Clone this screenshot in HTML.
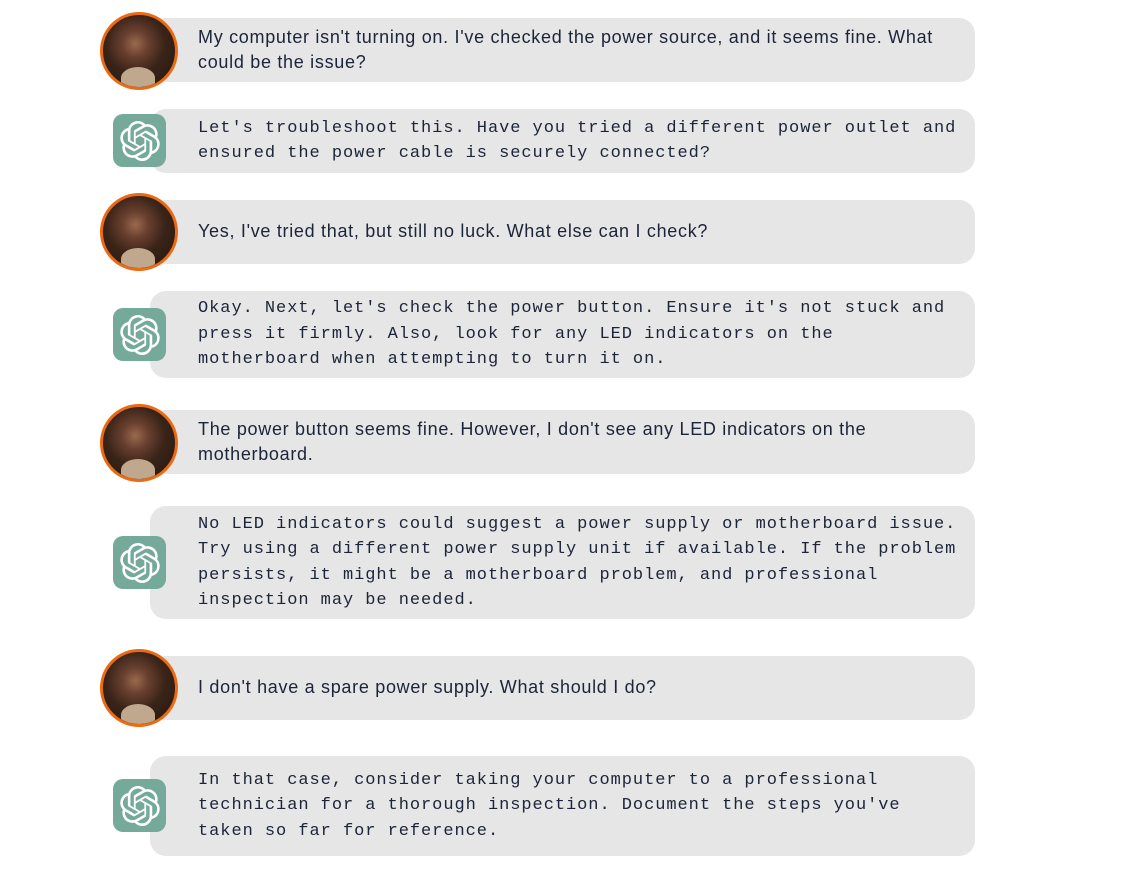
<!DOCTYPE html>
<html><head><meta charset="utf-8"><style>
body{margin:0;width:1144px;height:874px;background:#fff;position:relative;overflow:hidden;font-family:"Liberation Sans",sans-serif;color:#1c2438}
.b{position:absolute;left:150px;width:825px;background:#e6e6e6;border-radius:16px;display:flex;align-items:center;box-sizing:border-box;padding-left:48px}
.b div{line-height:25.5px}
.u div{font-size:18px;letter-spacing:0.7px}
.m div{font-family:"Liberation Mono",monospace;font-size:17px;letter-spacing:0.95px;white-space:pre}
.av{position:absolute;left:100px;width:72px;height:72px;border:3px solid #ec6a12;border-radius:50%;background:radial-gradient(circle at 45% 40%,#9a6a4c 0,#6a4030 22%,#3a2418 50%,#221610 100%);overflow:hidden}
.av:after{content:"";position:absolute;left:18px;top:52px;width:34px;height:22px;border-radius:50% 50% 0 0;background:#bfa88e}
.ic{position:absolute;left:113px;width:53px;height:53px;border-radius:10px;background:#75a999;display:flex;align-items:center;justify-content:center}
</style></head><body>
<svg width="0" height="0" style="position:absolute"><defs><symbol id="o" viewBox="0 0 24 24"><path fill="#fff" d="M22.2819 9.8211a5.9847 5.9847 0 0 0-.5157-4.9108 6.0462 6.0462 0 0 0-6.5098-2.9A6.0651 6.0651 0 0 0 4.9807 4.1818a5.9847 5.9847 0 0 0-3.9977 2.9 6.0462 6.0462 0 0 0 .7427 7.0966 5.98 5.98 0 0 0 .511 4.9107 6.051 6.051 0 0 0 6.5146 2.9001A5.9847 5.9847 0 0 0 13.2599 24a6.0557 6.0557 0 0 0 5.7718-4.2058 5.9894 5.9894 0 0 0 3.9977-2.9001 6.0557 6.0557 0 0 0-.7475-7.0729zm-9.022 12.6081a4.4755 4.4755 0 0 1-2.8764-1.0408l.1419-.0804 4.7783-2.7582a.7948.7948 0 0 0 .3927-.6813v-6.7369l2.02 1.1686a.071.071 0 0 1 .038.052v5.5826a4.504 4.504 0 0 1-4.4945 4.4944zm-9.6607-4.1254a4.4708 4.4708 0 0 1-.5346-3.0137l.142.0852 4.783 2.7582a.7712.7712 0 0 0 .7806 0l5.8428-3.3685v2.3324a.0804.0804 0 0 1-.0332.0615L9.74 19.9502a4.4992 4.4992 0 0 1-6.1408-1.6464zM2.3408 7.8956a4.485 4.485 0 0 1 2.3655-1.9728V11.6a.7664.7664 0 0 0 .3879.6765l5.8144 3.3543-2.0201 1.1685a.0757.0757 0 0 1-.071 0l-4.8303-2.7865A4.504 4.504 0 0 1 2.3408 7.872zm16.5963 3.8558L13.1038 8.364 15.1192 7.2a.0757.0757 0 0 1 .071 0l4.8303 2.7913a4.4944 4.4944 0 0 1-.6765 8.1042v-5.6772a.79.79 0 0 0-.407-.667zm2.0107-3.0231l-.142-.0852-4.7735-2.7818a.7759.7759 0 0 0-.7854 0L9.409 9.2297V6.8974a.0662.0662 0 0 1 .0284-.0615l4.8303-2.7866a4.4992 4.4992 0 0 1 6.6802 4.66zM8.3065 12.863l-2.02-1.1638a.0804.0804 0 0 1-.038-.0567V6.0742a4.4992 4.4992 0 0 1 7.3757-3.4537l-.142.0805L8.704 5.459a.7948.7948 0 0 0-.3927.6813zm1.0976-2.3654l2.602-1.4998 2.6069 1.4998v2.9994l-2.5974 1.5-2.6067-1.5Z"/></symbol></defs></svg>

<div class="b u" style="top:18px;height:64px"><div>My computer isn't turning on. I've checked the power source, and it seems fine. What<br>could be the issue?</div></div>
<div class="av" style="top:12px"></div>

<div class="b m" style="top:109px;height:64px"><div>Let's troubleshoot this. Have you tried a different power outlet and
ensured the power cable is securely connected?</div></div>
<div class="ic" style="top:114px"><svg width="40" height="40"><use href="#o"/></svg></div>

<div class="b u" style="top:200px;height:64px"><div>Yes, I've tried that, but still no luck. What else can I check?</div></div>
<div class="av" style="top:193px"></div>

<div class="b m" style="top:291px;height:87px"><div>Okay. Next, let's check the power button. Ensure it's not stuck and
press it firmly. Also, look for any LED indicators on the
motherboard when attempting to turn it on.</div></div>
<div class="ic" style="top:308px"><svg width="40" height="40"><use href="#o"/></svg></div>

<div class="b u" style="top:410px;height:64px"><div>The power button seems fine. However, I don't see any LED indicators on the<br>motherboard.</div></div>
<div class="av" style="top:404px"></div>

<div class="b m" style="top:506px;height:113px"><div>No LED indicators could suggest a power supply or motherboard issue.
Try using a different power supply unit if available. If the problem
persists, it might be a motherboard problem, and professional
inspection may be needed.</div></div>
<div class="ic" style="top:536px"><svg width="40" height="40"><use href="#o"/></svg></div>

<div class="b u" style="top:656px;height:64px"><div>I don't have a spare power supply. What should I do?</div></div>
<div class="av" style="top:649px"></div>

<div class="b m" style="top:756px;height:100px"><div>In that case, consider taking your computer to a professional
technician for a thorough inspection. Document the steps you've
taken so far for reference.</div></div>
<div class="ic" style="top:779px"><svg width="40" height="40"><use href="#o"/></svg></div>
</body></html>
